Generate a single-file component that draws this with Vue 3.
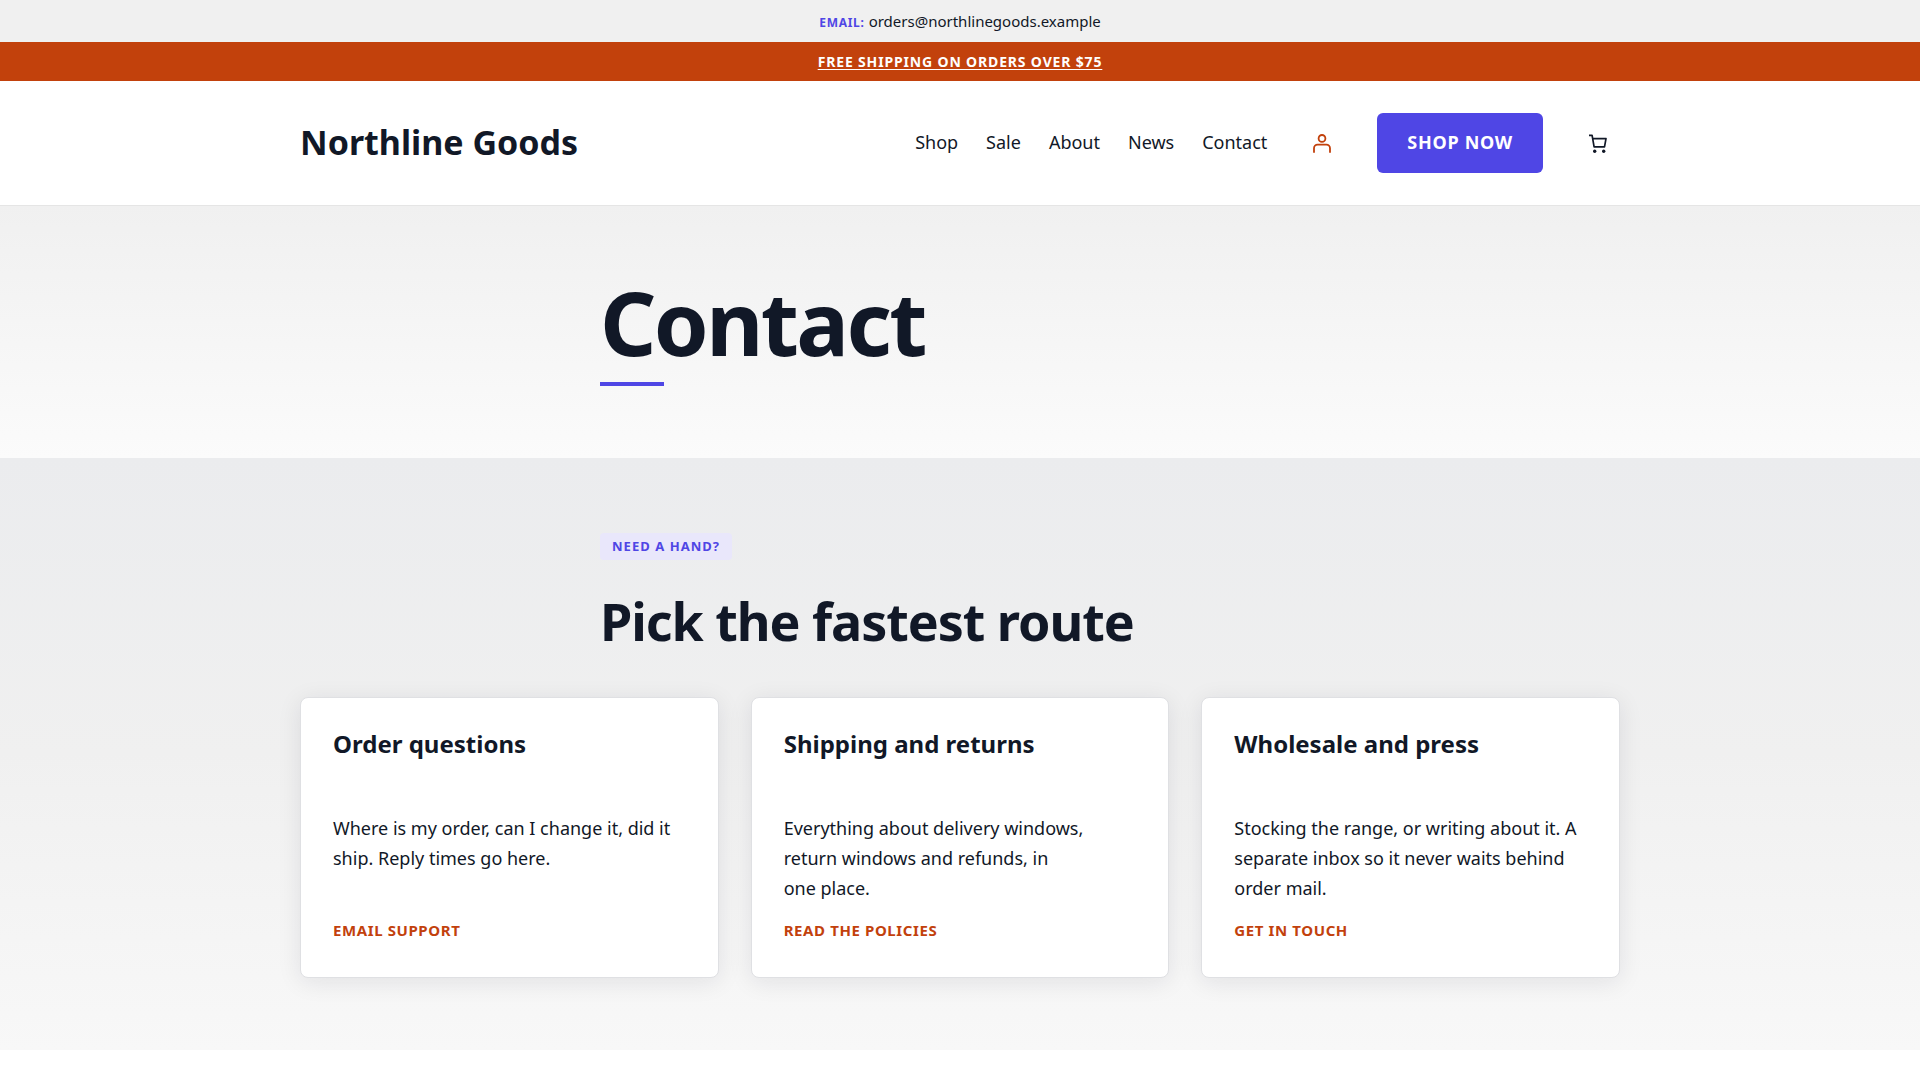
<script setup>
const links = ['Shop', 'Sale', 'About', 'News', 'Contact']

const cards = [
  {
    title: 'Order questions',
    text: 'Where is my order, can I change it, did it ship. Reply times go here.',
    action: 'Email support',
  },
  {
    title: 'Shipping and returns',
    text: 'Everything about delivery windows, return windows and refunds, in one\u00a0place.',
    action: 'Read the policies',
  },
  {
    title: 'Wholesale and press',
    text: 'Stocking the range, or writing about it. A separate inbox so it never waits behind order\u00a0mail.',
    action: 'Get in touch',
  },
]
</script>

<template>
  <div class="page">
    <div class="contact-bar">
      <span class="contact-label">Email:</span>
      <a href="mailto:orders@northlinegoods.example">orders@northlinegoods.example</a>
    </div>
    <div class="promo-bar"><a href="#shipping">Free shipping on orders over $75</a></div>

    <header class="site-header">
      <div class="container header-row">
        <a class="brand" href="#home">Northline Goods</a>
        <div class="header-tools">
          <nav class="nav" aria-label="Main">
            <a v-for="link in links" :key="link" :href="'#' + link.toLowerCase()">{{ link }}</a>
          </nav>
          <a class="icon-link account" href="#account" aria-label="Account">
            <svg width="24" height="24" viewBox="0 0 24 24" fill="none" stroke="currentColor" stroke-width="1.8" aria-hidden="true">
              <circle cx="12" cy="7.4" r="3.4" />
              <path d="M4 21.8v-4.6a3.6 3.6 0 0 1 3.6-3.6h8.8a3.6 3.6 0 0 1 3.6 3.6v4.6" />
            </svg>
          </a>
          <a class="button" href="#shop">Shop now</a>
          <button class="icon-link" type="button" aria-label="Cart">
            <svg width="24" height="24" viewBox="0 0 24 24" fill="none" stroke="currentColor" stroke-width="1.7" stroke-linejoin="round" aria-hidden="true">
              <path d="M3 4.3h3.1L8.1 15.8h10.4L20 7.7H6.7" />
              <circle cx="8.7" cy="20.2" r="1.7" fill="currentColor" stroke="none" />
              <circle cx="17.7" cy="20.2" r="1.7" fill="currentColor" stroke="none" />
            </svg>
          </button>
        </div>
      </div>
    </header>

    <main>
      <section class="hero">
        <div class="narrow">
          <h1>Contact</h1>
          <div class="rule"></div>
        </div>
      </section>

      <section class="routes">
        <div class="narrow">
          <span class="badge">Need a hand?</span>
          <h2>Pick the fastest route</h2>
        </div>
        <div class="container cards">
          <article v-for="card in cards" :key="card.title" class="card">
            <h3>{{ card.title }}</h3>
            <p>{{ card.text }}</p>
            <a class="card-link" href="#contact">{{ card.action }}</a>
          </article>
        </div>
      </section>
    </main>
  </div>
</template>

<style>
body {
  margin: 0;
  background: #fff;
}
</style>

<style scoped>
.page {
  color: #111827;
  font-family: "Noto Sans", sans-serif;
  font-size: 18px;
  line-height: 30px;
}

a {
  color: inherit;
  text-decoration: none;
}

h1,
h2,
h3,
p {
  margin: 0;
}

.container,
.narrow {
  box-sizing: border-box;
  margin: 0 auto;
  width: calc(100% - 48px);
}

.container {
  max-width: 1320px;
}

.narrow {
  max-width: 720px;
}

.contact-bar {
  display: flex;
  align-items: baseline;
  justify-content: center;
  gap: 4px;
  padding: 9px 24px;
  background: #f0f0f0;
  font-size: 15px;
  line-height: 24px;
}

.contact-label {
  color: #4f46e5;
  font-size: 12px;
  font-weight: 700;
  letter-spacing: 0.06em;
  line-height: 16px;
  text-transform: uppercase;
}

.promo-bar {
  padding: 8px 24px;
  background: #c2410c;
  color: #fff;
  font-size: 14px;
  font-weight: 700;
  letter-spacing: 0.06em;
  line-height: 23px;
  text-align: center;
  text-transform: uppercase;
}

.promo-bar a {
  text-decoration: underline;
  text-underline-offset: 2px;
}

.site-header {
  padding: 32px 0;
  border-bottom: 1px solid #e5e5e5;
  background: #fff;
}

.header-row,
.header-tools,
.nav {
  display: flex;
  align-items: center;
}

.header-row {
  justify-content: space-between;
}

.header-tools {
  gap: 33px;
}

.nav {
  gap: 28px;
  padding-bottom: 2px;
}

.brand {
  padding-bottom: 2px;
  font-size: 34px;
  font-weight: 700;
  line-height: 40px;
}

.icon-link {
  display: flex;
  align-items: center;
  justify-content: center;
  width: 44px;
  height: 44px;
  padding: 0;
  border: 0;
  background: none;
  color: #111827;
}

.icon-link.account {
  color: #c2410c;
}

.button {
  padding: 14px 30px 16px;
  border-radius: 6px;
  background: #4f46e5;
  color: #fff;
  font-weight: 700;
  letter-spacing: 0.04em;
  text-transform: uppercase;
}

.hero {
  padding: 72px 0;
  background: linear-gradient(#f0f0f0, #fbfbfb);
}

h1 {
  font-size: 88px;
  font-weight: 700;
  letter-spacing: -0.03em;
  line-height: 88px;
}

.rule {
  width: 64px;
  height: 4px;
  margin-top: 16px;
  background: #4f46e5;
}

.routes {
  padding: 75px 0 72px;
  background: linear-gradient(#ebecee, #f0f0f0 50%, #f8f8f8);
}

.badge {
  display: block;
  width: fit-content;
  padding: 4px 12px;
  border-radius: 4px;
  background: #e9e7fb;
  color: #4f46e5;
  font-size: 13px;
  font-weight: 700;
  letter-spacing: 0.08em;
  line-height: 19px;
  text-transform: uppercase;
}

h2 {
  margin: 31px 0 46px;
  font-size: 52px;
  font-weight: 700;
  letter-spacing: -0.02em;
  line-height: 60px;
}

.cards {
  display: grid;
  grid-template-columns: repeat(3, 1fr);
  gap: 32px;
}

.card {
  display: flex;
  flex-direction: column;
  align-items: flex-start;
  padding: 32px 32px 35px;
  border: 1px solid #dfe0e3;
  border-radius: 8px;
  background: #fff;
  box-shadow: 0 4px 24px rgba(17, 24, 39, 0.09);
}

.card p {
  margin: 55px 0 15px;
}

h3 {
  font-size: 24px;
  font-weight: 700;
  line-height: 28px;
}

.card-link {
  margin-top: auto;
  color: #c2410c;
  font-size: 15px;
  font-weight: 700;
  letter-spacing: 0.04em;
  line-height: 24px;
  text-transform: uppercase;
}

@media (max-width: 1100px) {
  .header-row,
  .header-tools {
    flex-wrap: wrap;
  }

  .cards {
    grid-template-columns: 1fr;
  }
}
</style>
